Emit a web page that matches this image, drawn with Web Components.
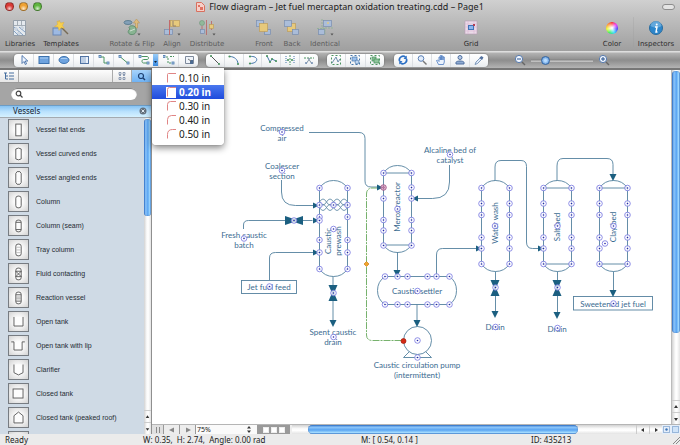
<!DOCTYPE html>
<html lang="en">
<head>
<meta charset="utf-8">
<title>Flow diagram</title>
<style>
html,body{height:100%;margin:0}
body{font:8px/10px "Noto Sans","Open Sans",sans-serif;color:#222;overflow:hidden}
</style>
</head>
<body>
<diagram-app></diagram-app>
<script>
const base = `<style>*{box-sizing:border-box}button{font:inherit;color:inherit;background:none;border:0;padding:0;margin:0;display:flex;align-items:center;justify-content:center}svg{display:block}</style>`;
const define = (name, render, after) => customElements.define(name, class extends HTMLElement {
  constructor() { super(); this.attachShadow({ mode: 'open' }); }
  connectedCallback() { this.shadowRoot.innerHTML = base + render(this); if (after) after(this); }
});
const svg = (w, h, body, extra = '') => `<svg width="${w}" height="${h}" viewBox="0 0 ${w} ${h}" fill="none" aria-hidden="true" ${extra}>${body}</svg>`;

/* Large toolbar icons, 18 x 18 */
const blueBox = (x, y, w, h) => `<rect x="${x}" y="${y}" width="${w}" height="${h}" fill="#a9bfe0" stroke="#7088b0" stroke-width=".7"/>`;
const goldBox = (x, y, w, h) => `<rect x="${x}" y="${y}" width="${w}" height="${h}" fill="#f0cd72" stroke="#c09a4c" stroke-width=".7"/>`;
const more = `<path d="M14.500 14.500h3l-1.500 2z" fill="#444"/>`;
const big = {
  libraries: `<path d="M2.500 1.500h12v15h-12z" fill="#e4e9ee" stroke="#96a0aa"/><path d="M3 6.500h11M6.500 2v4.500M10.500 2v4.500" stroke="#a4adb6"/><path d="M3 8l9 8M8 8l6 5M3 12l4 4" stroke="#86a3c6"/><path d="M4 9h2v2H4zM10 8h2v2h-2zM7 13h2v2H7z" fill="#fff" stroke="#8ba0b8" stroke-width=".5"/>`,
  templates: `<rect x="1" y="9" width="8" height="7" fill="#9db9e2" stroke="#6886b4"/><path d="M8 7l8 8" stroke="#776b55" stroke-width="1.500"/><path d="M7 1l1.600 3 3.400-.7-1.600 3.200 2 2.800-3.400-.5L7 11.500l-1-3.600-3.500-.4L5.500 5.500 5 2l2 1z" fill="#f7cf4d" stroke="#d9a92f" stroke-width=".4"/>`,
  rotate: `<ellipse cx="5" cy="3.500" rx="4" ry="2" fill="#7a9cb8" stroke="#53778d"/><path d="M13.500 0l3 4h-2v5h-2V4h-2z" fill="#e5bd73" stroke="#b98e4c" stroke-width=".6"/><path d="M6 8.500c1-3 7-2 7 1.500 1 4-2 6-5 5.500C5 15 4 12 7 10z" fill="#82b58d" stroke="#568b67"/><path d="M7 12l5-2" stroke="#d6e8d8"/>${more}`,
  align: `${goldBox(7.500, 1.500, 9, 6)}${blueBox(1.500, 10.500, 8, 5)}<path d="M6.500 1v15" stroke="#c45d5d"/><path d="M10 2v5h3" stroke="#8b7860"/>${more}`,
  distribute: `<circle cx="4" cy="4" r="2.500" fill="#8bb895" stroke="#659170" stroke-width=".6"/><path d="M8.500 1v15M4 7v8M13.500 2v9" stroke="#b96868"/>${blueBox(2.500, 10.500, 4, 4)}${goldBox(11.500, 5.500, 4, 4)}${more}`,
  front: `${blueBox(1.500, 1.500, 7, 6)}${blueBox(9.500, 10.500, 6, 5)}${goldBox(4.500, 4.500, 8, 8)}`,
  back: `${goldBox(4.500, 4.500, 8, 8)}${blueBox(1.500, 1.500, 7, 6)}${blueBox(9.500, 10.500, 6, 5)}`,
  identical: `${blueBox(7.500, 1.500, 8, 6)}${blueBox(2.500, 10.500, 6, 5)}<path d="M6 0v9h11M1 9.500h8v7" stroke="#8fb095" stroke-dasharray="2 1"/><circle cx="12" cy="4" r="1" fill="#e9ce7a"/>${more}`,
  grid: `<rect x="3" y="2" width="12" height="13" fill="#eadce8" stroke="#b99cb5" stroke-width=".6"/><path d="M3 5h12M3 8h12M3 12h12M6 2v13M12 2v13" stroke="#dcb6d5" stroke-width=".6"/><rect x="6.500" y="6.500" width="5" height="4" fill="#8db6ef" stroke="#4273b7"/><path d="M11 5h2v2h-2z" fill="#b33f54"/>`,
  inspectors: `<circle cx="9" cy="9" r="6.500" fill="#2d86cb" stroke="#296c9f"/><path d="M3.500 7a5.500 5 0 0 1 11 0c-3 2-7 2-11 0z" fill="#85bfe9" opacity=".6"/><circle cx="9.700" cy="5.500" r="1" fill="#fff"/><path d="M8 8h2l-1 5h1.500" stroke="#fff" stroke-width="1.400"/>`,
};
define('tool-button', el => {
  const icon = el.getAttribute('icon');
  const pic = icon === 'color' ? `<i class="wheel"></i>` : svg(18, 18, big[icon]);
  return `<style>
  :host{display:block;flex:none}
  button{flex-direction:column;width:100%;height:100%;gap:3px;font:7px/9px "DejaVu Sans",sans-serif;white-space:nowrap;color:#2e2e2e}
  :host([dim]) button{color:#5c5c5c}
  .pic{height:18px;display:grid;place-items:center}
  :host([dim]) svg{opacity:.85}
  .wheel{width:12px;height:12px;border-radius:50%;background:radial-gradient(circle,#fff 5%,transparent 65%),conic-gradient(#f33,#e3f,#44f,#3df,#3e6,#ef3,#f93,#f33)}
  </style><button type="button"><span class="pic">${pic}</span><span><slot></slot></span></button>`;
});

/* Small strip icons, 12 x 12 */
const G = '#4b9460', B = '#4677ab';
const sq = (x, y) => `<rect x="${x}" y="${y}" width="2" height="2" fill="#cfe0f5" stroke="${B}" stroke-width=".8"/>`;
const dot = (x, y, c = G) => `<circle cx="${x}" cy="${y}" r="1.100" fill="${c}"/>`;
const small = {
  pointer: `<path d="M4 1.500v8l2-2 1.300 3 1.200-.6-1.200-2.900h2.500z" fill="#eef5ff" stroke="#34619f" stroke-width=".8"/>`,
  rect: `<rect x="1" y="2.500" width="10" height="7" fill="#6ea3df" stroke="#3c72ae"/><path d="M2 4h8" stroke="#a9cdf2"/>`,
  ellipse: `<ellipse cx="6" cy="6" rx="5" ry="3.500" fill="#6ea3df" stroke="#3c72ae"/><path d="M3 4.500h6" stroke="#a9cdf2"/>`,
  text: `<rect x="2.500" y="2.500" width="8" height="7" fill="#eaf1fb" stroke="#5274a4"/><path d="M5 4h3M5 6h3M5 8h3M4 3v6" stroke="#6d90bd" stroke-width=".7"/>`,
  conn1: `${sq(1, 1.500)}${sq(9, 8)}<path d="M3 3h3v6h3" stroke="${G}"/>`,
  conn2: `${sq(1, 1.500)}${sq(9, 8)}<path d="M3 3.500l6 5" stroke="${G}"/>`,
  conn3: `${sq(1, 1.500)}${sq(9, 8)}<path d="M3.500 2.500H9c2 0 2 3 0 3H5.500c-2 0-2 3.500 0 3.500H9" stroke="${G}"/>`,
  conn4: `${sq(0, 1.500)}${sq(9, 8)}<path d="M3 3h2v6h4M7 2.500h4" stroke="${G}" stroke-dasharray="2 1"/>`,
  stamp: `<path d="M2.500 2.500h8v7h-8z" fill="#eff4fa" stroke="#7e8a9c"/><path d="M7 6h3v4H7z" fill="#4d6b91"/><path d="M5 5l3 2" stroke="#777"/>`,
  line: `<path d="M2 2l8 8" stroke="#555"/>${dot(2, 2)}${dot(10, 10)}`,
  arc: `<path d="M1.500 2.500c5 0 8 3 8.500 7" stroke="${B}"/>${dot(1.5, 2.5)}${dot(10, 10)}`,
  arc2: `<path d="M3 2.500c9-1 9 7 0 7" stroke="${B}"/>${dot(3, 2.5)}${dot(3, 9.5)}`,
  spline: `<path d="M2 2l3 6 2-3 4 2" stroke="${B}"/>${dot(2, 2)}${dot(5, 8)}${dot(7, 5)}${dot(11, 7)}`,
  mirror: `<path d="M6 1v10" stroke="#4b9460" stroke-dasharray="2 1"/><path d="M2 2v8M10 2v8" stroke="${B}" stroke-dasharray="1 1"/>${dot(4, 6)}${dot(8, 6)}`,
  cut: `<path d="M1 4h10" stroke="${G}" stroke-dasharray="2 1"/><path d="M3 10l4-6M9 10L5 4" stroke="#8496a8"/>${dot(3, 9, '#7e97b8')}${dot(9, 9, '#7e97b8')}`,
  sel1: `<path d="M1.500 1.500h9v9h-9z" stroke="${G}" stroke-dasharray="2 2"/><path d="M2 9l4-6 2 5 2-3" stroke="#6f8dac"/>`,
  sel2: `<path d="M1.500 1.500h9v9h-9z" stroke="${B}" stroke-dasharray="2 2"/><rect x="3" y="3" width="5" height="4" fill="#9cc0ec" stroke="${B}" stroke-width=".7"/><circle cx="8" cy="8" r="2" fill="#bfd6f2" stroke="${B}" stroke-width=".7"/>`,
  sel3: `<path d="M1.500 1.500h9v9h-9z" stroke="${G}" stroke-dasharray="2 2"/><rect x="3" y="3" width="4" height="4" fill="#8fc59c" stroke="${G}" stroke-width=".8"/><rect x="5" y="5" width="5" height="4" fill="#8fc59c" stroke="${G}" stroke-width=".8"/>`,
  refresh: `<path d="M2.500 7a3.700 3.700 0 0 1 6-3.800M9.500 5a3.700 3.700 0 0 1-6 3.800" stroke="#2b6fc4" stroke-width="1.700"/><path d="M9.800 1.500v3.400H6.500zM2.200 10.500V7.100h3.300z" fill="#2b6fc4"/>`,
  glass: `<circle cx="5" cy="4.500" r="2.800" fill="#e2edfb" stroke="#5a7fb5"/><path d="M7 7l3.500 3.500" stroke="#777" stroke-width="1.400"/>`,
  hand: `<path d="M3.500 10.500L1.500 6.500l1-.5 1.500 1.500V3h1.300v3-4.500h1.400V6 2h1.300v4-3h1.300v5L8.500 10.500z" fill="#eaf2fd" stroke="#4c7bc0" stroke-width=".8"/>`,
  person: `<circle cx="6" cy="3.500" r="2" fill="#b9cbe6" stroke="#4e6f9f"/><path d="M2 8.500c0-2 8-2 8 0v1.500H2z" fill="#8eaad2" stroke="#4e6f9f"/>`,
  dropper: `<path d="M2 10.500l1-2.500 4-4 1.500 1.500-4 4z" fill="#dfe9f6" stroke="#6685ad" stroke-width=".8"/><path d="M6.500 3.500l2-1.500 2 1.500-1.500 2.500z" fill="#54729f"/>`,
};
define('tool-capsule', el => `<style>
  :host{display:flex;flex:none;height:13px;border-radius:4px;background:linear-gradient(#fff,#f7f8f9 50%,#e9ecef);box-shadow:0 0 1px 1px #7777;overflow:hidden}
  button{flex:1;border-left:1px solid #dcdfe3}
  button:first-of-type{border:0}
  button.drop{flex:none;width:5px;height:12px;background:linear-gradient(#9acdf8,#3c8ce2);border:0}
  </style>${el.getAttribute('icons').split(' ').map(n => n === 'drop'
    ? `<button type="button" class="drop" aria-label="Corner radius">${svg(5, 12, '<path d="M1 7h3l-1.500 2z" fill="#123"/>')}</button>`
    : `<button type="button" aria-label="${n}">${svg(12, 12, small[n])}</button>`).join('')}`);

define('zoom-slider', () => `<style>
  :host{display:flex;align-items:center;gap:5px}
  input{appearance:none;width:62px;height:9px;margin:0;background:linear-gradient(#0000 3px,#7c7c7c 3px,#b6b6b6 5px,#c9c9c9 6px,#0000 6px)}
  input::-webkit-slider-thumb{appearance:none;width:9px;height:9px;border-radius:50%;border:1px solid #3565a0;background:radial-gradient(#b9dcff 20%,#3f83d0)}
  </style>
  <button type="button" aria-label="Zoom out">${svg(12, 12, '<circle cx="5" cy="5" r="3.600" fill="#f2f7ff" stroke="#567bb0"/><path d="M3 5h4" stroke="#26538f"/><path d="M8 8l3 3" stroke="#666" stroke-width="1.400"/>')}</button>
  <input type="range" min="0" max="100" value="18" aria-label="Zoom">
  <button type="button" aria-label="Zoom in">${svg(12, 12, '<circle cx="5" cy="5" r="3.600" fill="#f2f7ff" stroke="#567bb0"/><path d="M3 5h4M5 3v4" stroke="#26538f"/><path d="M8 8l3 3" stroke="#666" stroke-width="1.400"/>')}</button>`);

/* Library shapes, 21 x 21 */
const shapes = {
  flat: `<rect x="7.500" y="4.500" width="6" height="13"/>`,
  curved: `<path d="M7.500 5.500q3-2 6 0v11q-3 2-6 0z"/>`,
  angled: `<path d="M7.500 6l1.500-2h3l1.500 2v10l-1.500 2h-3l-1.500-2z"/>`,
  column: `<rect x="7.500" y="4.500" width="6" height="13" rx="2.500"/>`,
  seam: `<rect x="7.500" y="4.500" width="6" height="13" rx="2.500"/><path d="M7.500 7h6M7.500 15h6"/>`,
  tray: `<rect x="7.500" y="4.500" width="6" height="13" rx="2.500"/><path d="M7.500 8h6M7.500 11h6M7.500 14h6" stroke="#bbb"/>`,
  fluid: `<rect x="7.500" y="4.500" width="6" height="13" rx="2.500"/><path d="M7.500 8h6M7.500 14h6M7.500 8l6 6M13.500 8l-6 6"/>`,
  reaction: `<rect x="7.500" y="4.500" width="6" height="13" rx="2.500"/><path d="M7.500 7.500h6M7.500 14.500h6"/><path d="M7.500 10h6M7.500 12h6" stroke="#999"/>`,
  open: `<path d="M5.500 5.500v10h10v-10"/>`,
  lip: `<path d="M2.500 6.500h3v9h9v-9h3"/>`,
  clarifier: `<path d="M5.500 5v9l5 2.500 5-2.500V5"/>`,
  closed: `<rect x="4.500" y="5.500" width="11" height="10"/>`,
  peaked: `<path d="M5.500 16.500V8.500l5-4 5 4v8z"/>`,
  dome: `<path d="M5.500 16.500V8.500q5-6 10 0v8z"/>`,
};
define('library-item', el => `<style>
  :host{display:flex;flex:none}
  button{gap:7px;justify-content:flex-start;font:7px/9px "Liberation Sans",Arial,sans-serif;color:#252b33}
  svg{background:radial-gradient(circle,#fff 25%,#d3d3d3);border:1px solid #777c82;fill:#fdfdfd;stroke:#555;stroke-width:1}
  </style><button type="button"><svg width="21" height="21" viewBox="0 0 21 21" aria-hidden="true">${shapes[el.getAttribute('shape')]}</svg><span><slot></slot></span></button>`);

define('scroll-bar', el => {
  const v = el.hasAttribute('vertical'), dir = v ? '90deg' : '180deg';
  const a = v ? ['M4 2l2 3H2z', 'M4 6l2-3H2z'] : ['M2 4l3-2v4z', 'M6 4L3 2v4z'];
  return `<style>
  :host{display:flex;flex-direction:${v ? 'column' : 'row'};background:linear-gradient(${dir},#d2d2d2,#fafafa 40%,#fff 60%,#e3e3e3)}
  .track{flex:1;min-${v ? 'height' : 'width'}:0;display:flex;flex-direction:inherit}
  .start{flex:var(--before)}.thumb{flex:var(--size);border-radius:5px;background:linear-gradient(${dir},#2f72c9,#8cc5fa 25%,#5aa5f2 55%,#a4dcff 85%,#3e7fce);box-shadow:inset 0 0 1px #174c9b}
  .end{flex:var(--after)}
  button{flex:none;${v ? 'height:12px;width:100%;border-top' : 'width:13px;height:100%;border-left'}:1px solid #ccc}
  </style><div class="track"><span class="start"></span><span class="thumb"></span><span class="end"></span></div>
  ${a.map((d, i) => `<button type="button" aria-label="${i ? 'Forward' : 'Back'}">${svg(8, 8, `<path d="${d}" fill="#333"/>`)}</button>`).join('')}`;
});

define('library-panel', () => {
  const items = [['flat', 'Vessel flat ends'], ['curved', 'Vessel curved ends'], ['angled', 'Vessel angled ends'], ['column', 'Column'], ['seam', 'Column (seam)'], ['tray', 'Tray column'], ['fluid', 'Fluid contacting'], ['reaction', 'Reaction vessel'], ['open', 'Open tank'], ['lip', 'Open tank with lip'], ['clarifier', 'Clarifier'], ['closed', 'Closed tank'], ['peaked', 'Closed tank (peaked roof)'], ['dome', '']];
  return `<style>
  :host{display:flex;flex-direction:column;min-height:0;border-right:1px solid #8f8f8f}
  .tabs{display:flex;height:13px;flex:none;background:linear-gradient(#fdfdfd,#e6e6e6);border-bottom:1px solid #9a9a9a}
  .tabs button{width:19px;border-right:1px solid #aaa}
  .tabs .gap{flex:1;border-right:1px solid #aaa}
  .tabs .on{background:linear-gradient(#a7d3fb,#6fb2f3);border:0}
  .search{flex:none;height:22px;background:#a5a5a5;padding:0 14px 0 11px;display:flex;align-items:center}
  label{flex:1;min-width:0;display:flex;align-items:center;height:12px;padding-left:4px;border-radius:6px;background:#fff;box-shadow:inset 0 1px 1px #777}
  label svg{flex:none}
  input{flex:1;min-width:0;height:10px;border:0;outline:0;background:none;font:inherit;padding:0 4px}
  header{flex:none;height:13px;display:flex;align-items:center;justify-content:space-between;padding:0 4px 2px 13px;border-top:1px solid #6c9cc5;border-bottom:1px solid #a4aab0;background:linear-gradient(#86c3f4,#b9e1fd 50%,#d5f1ff)}
  h2{margin:0;font:8px/8px "Noto Sans",sans-serif;color:#16222e}
  .body{flex:1;min-height:0;display:flex;background:#cfdae5}
  .list{flex:1;min-height:0;overflow:hidden;display:flex;flex-direction:column;gap:3px;padding:1px 0 0 8px}
  scroll-bar{width:7px;flex:none;--before:1;--size:97;--after:195}
  </style>
  <div class="tabs"><button type="button" aria-label="Tree">${svg(12, 10, '<path d="M1 2h3M6 2h5M6 5h5M6 8h5M2.500 2v6H5M2.500 5H5" stroke="#466e9f"/>')}</button><span class="gap"></span><button type="button" aria-label="Grid">${svg(10, 10, '<path d="M2 1.500h2v2H2zM6 1.500h2v2H6zM2 6.500h2v2H2zM6 6.500h2v2H6zM2 4.500h2M6 4.500h2" stroke="#7688a5" stroke-width=".8"/>')}</button><button type="button" class="on" aria-label="Search">${svg(9, 9, '<circle cx="4" cy="4" r="2.500" stroke="#1d3f70" stroke-width="1.200"/><path d="M6 6l2 2" stroke="#1d3f70" stroke-width="1.500"/>')}</button></div>
  <div class="search"><label>${svg(8, 8, '<circle cx="3.500" cy="3.500" r="2.300" stroke="#444" stroke-width="1.200"/><path d="M5 5l2.500 2.500" stroke="#444" stroke-width="1.300"/>')}<input type="text" aria-label="Search libraries"></label></div>
  <header><h2>Vessels</h2><button type="button" aria-label="Close">${svg(8, 8, '<circle cx="4" cy="4" r="3.500" fill="#64707c"/><path d="M2.500 2.500l3 3M5.500 2.500l-3 3" stroke="#dfe9f2"/>')}</button></header>
  <div class="body"><div class="list">${items.map(([s, t]) => `<library-item shape="${s}">${t}</library-item>`).join('')}</div><scroll-bar vertical></scroll-bar></div>`;
});

/* The drawing. Coordinates are those of the page that it lies on. */
const handle = (x, y, c = '') => `<g class="h ${c}"><circle cx="${x}" cy="${y}" r="2.800"/><circle class="dot" cx="${x}" cy="${y}" r=".8"/></g>`;
const handles = (xs, ys) => xs.map(x => ys.map(y => handle(x, y)).join('')).join('');
const vessel = (x, top, bottom, seams) => `<path d="M${x} ${top}v${bottom - top}q5 7.500 14 7.500t14-7.500V${top}q-5-7.500-14-7.500t-14 7.500z"/>${seams ? `<path d="M${x} ${top}h28M${x} ${bottom}h28"/>` : ''}`;
const down = (x, y) => `<path class="f" d="M${x - 3.5} ${y - 7}h7l-3.500 7z"/>`;
const right = (x, y) => `<path class="f" d="M${x - 6} ${y - 3}v6l6-3z"/>`;
const valve = (x, y) => `<path class="f" d="M${x - 4.5} ${y - 8}h9l-3.500 8 3.500 8h-9l3.500-8z"/>`;
const coil = [202, 207.5].map(y => `<path d="M319.500 ${y}q3.500-6 7 0t7 0 7 0 7 0M319.500 ${y}q3.500 6 7 0t7 0 7 0 7 0"/>`).join('');
define('flow-diagram', () => `<style>
  :host{display:block;overflow:hidden;background:#fff}
  svg{width:100%;height:100%}
  .lines{stroke:#54819e;stroke-width:.9}
  .f{fill:#1b5f80;stroke:none}
  text{font:8px Lato,"Open Sans",sans-serif;fill:#3b6c91;stroke:none;text-anchor:middle}
  .h circle{fill:#fff;fill-opacity:.75;stroke:#7474df;stroke-width:.8}
  .h .dot{fill:#2424a8;fill-opacity:1;stroke:none}
  .h.pink circle{fill:#d6a0bc;stroke:#9a4b83}
  </style>
  <svg viewBox="152 70 519 354" preserveAspectRatio="xMinYMin meet" fill="none" role="img" aria-label="Jet fuel mercaptan oxidation treating">
  <g class="lines">
    ${vessel(319.5, 188, 269)}${vessel(383.5, 173, 245, true)}${vessel(481.5, 188, 264)}${vessel(543.5, 188, 264, true)}${vessel(599.5, 188, 264, true)}
    <path d="M385 276.500h64.500q7 5 7 14t-7 14H385q-7.500-5-7.500-14t7.500-14z"/>
    <g stroke-width=".8">${coil}</g>
    <path d="M309 132.500h50q6 0 6 6V181q0 6 6 6h8"/>
    <path d="M281.500 180v12q0 13.500 14 13.500h18"/>
    <path d="M243.500 229v-4q0-4.500 5-4.500h64"/>
    <path d="M269.500 280v-22q0-5.500 6-5.500h38"/>
    <path d="M333 276.500V322M397.500 252v20M417 304.500V322"/>
    <path d="M449.500 165v17q0 16.500-17 16.500H417"/>
    <path d="M436.500 276v-21q0-6.500 6-6.500H476"/>
    <path d="M495 181v-14q0-6.500 6-6.500h20q5.500 0 5.500 6V242q0 6.500 6 6.500h6"/>
    <path d="M557 181v-15q0-7.500 6-7.500h44q6 0 6 6V176"/>
    <path d="M495.500 271.500V314M557.500 271.500V314M613.500 271.500V292"/>
    <path d="M409 352l-5.500 5.500h28L426 352"/><circle cx="417.500" cy="340.500" r="14" fill="#fff"/>
    <rect x="241.500" y="280.500" width="55" height="13"/><rect x="573.500" y="296.500" width="79" height="13.500"/>
  </g>
  <path d="M378 188h-5q-6.500 0-6.500 6V335q0 5.500 6 5.500H403" stroke="#77b26d" stroke-dasharray="7 1 2 1"/>
  ${right(383, 187.5)}${right(319, 205.5)}${right(319, 220.5)}${right(319, 252.5)}${right(482, 248.5)}${right(544, 248.5)}
  <path class="f" d="M412 198.500l6-3v6z"/><path class="f" d="M285 216l9 3 9-3v9l-9-3-9 3z"/>
  ${down(333, 327)}${down(397, 277)}${down(417, 327)}${down(495, 318)}${down(557, 319)}${down(613, 181)}${down(613, 297)}
  ${valve(333, 293)}${valve(495, 288)}${valve(557, 288)}
  <g>
    <text x="282" y="131">Compressed</text><text x="282" y="141">air</text>
    <text x="282" y="169">Coalescer</text><text x="282" y="179">section</text>
    <text x="244" y="238">Fresh caustic</text><text x="244" y="248">batch</text>
    <text x="269" y="290">Jet fuel feed</text>
    <text x="333" y="335">Spent caustic</text><text x="333" y="345">drain</text>
    <text x="450" y="153">Alcaline bed of</text><text x="450" y="163">catalyst</text>
    <text x="417" y="294">Caustic settler</text>
    <text x="417" y="368">Caustic circulation pump</text><text x="417" y="378">(intermittent)</text>
    <text x="495" y="330">Drain</text><text x="557" y="332">Drain</text><text x="613" y="307">Sweetened jet fuel</text>
    <text transform="translate(331 241) rotate(-90)">Caustic</text><text transform="translate(341 241) rotate(-90)">prewash</text>
    <text transform="translate(400 207) rotate(-90)">Merox reactor</text><text transform="translate(498 223) rotate(-90)">Water wash</text>
    <text transform="translate(560 227) rotate(-90)">Salt bed</text><text transform="translate(616 227) rotate(-90)">Clay bed</text>
  </g>
  ${handles([319.5, 347.5], [188, 205, 217, 240, 252.5, 269])}${handle(319.5, 220.5)}
  ${handles([383.5, 411.5], [173, 198.5, 220, 230.5, 245.5])}${handle(383.5, 187.5, 'pink')}${handle(411.5, 187.5)}
  ${handles([481.5, 509.5, 543.5, 571.5, 599.5, 627.5], [188, 203.5, 215, 237.5, 248.5, 264])}
  ${handles([385, 397.5, 407.5, 427.5, 436.5, 449.5], [276.5, 304.5])}
  ${[[282, 132], [282, 170.5], [333.5, 205], [333.5, 229], [294, 220.5], [244, 238.5], [269.5, 286.5], [333.5, 293], [333.5, 337], [397.5, 209], [450, 154.5], [417.5, 291], [417.5, 340.5], [417.5, 357.5], [495, 226], [557.5, 226], [613.5, 226], [605, 243.5], [495.5, 287.5], [557.5, 287.5], [495.5, 327], [557.5, 328], [613.5, 303.5]].map(p => handle(...p)).join('')}
  <path d="M366.500 261.500l2.500 2.500-2.500 2.500-2.500-2.500z" fill="#f2a52c" stroke="#c9811c" stroke-width=".7"/>
  <circle cx="403.500" cy="341" r="2.500" fill="#d42a14" stroke="#a11d0f" stroke-width=".7"/>
  </svg>`);

define('radius-menu', () => `<style>
  :host{display:block;background:#fffffff5;border-radius:0 0 4px 4px;padding:3px 0 4px;box-shadow:0 3px 7px #0007,0 0 1px #0006}
  button{width:100%;height:14px;gap:3px;padding-left:14px;justify-content:flex-start;font:10px/14px "Noto Sans",sans-serif;color:#222}
  .on{background:linear-gradient(#4a78ee,#1f4bdc);color:#fff;font-weight:700}
  </style><div role="menu">${[0.1, 0.2, 0.3, 0.4, 0.5].map((v, i) => `<button type="button" role="menuitem" class="${i === 1 ? 'on' : ''}">${svg(10, 12, `${i === 1 ? '<path d="M0 1h10v11H0z" fill="#fff"/>' : ''}<path d="M1.500 10.500V${2.5 + i}q0-${1 + i} ${1 + i}-${1 + i}H10" stroke="#e08585"/>`)}<span>${v.toFixed(2)} in</span></button>`).join('')}</div>`);

define('page-bar', () => `<style>
  :host{display:flex;height:10px;background:#ededed;border-top:1px solid #b5b5b5}
  .nav{display:flex;flex:none}
  .nav button{width:16px;border-right:1px solid #999}
  .nav button:first-child{width:12px;background:#e0e0e0}
  select{appearance:none;border:0;margin:0;padding:0 0 0 1px;width:50px;height:9px;background:#fafafa;font:7px/9px "Noto Sans",sans-serif;color:#222}
  .zoom{display:flex;align-items:center;width:61px;background:#fafafa}
  .film{flex:none;width:33px;background:#9a9a9a;gap:2px}
  .film i{width:6px;height:6px;background:#fff;border:1px solid #eee}
  scroll-bar{flex:1;--before:16;--size:273;--after:59;margin-left:2px}
  .views{display:flex;flex:none;width:18px;background:#e4eefa}
  .views button{flex:1}
  </style>
  <div class="nav"><button type="button" aria-label="Pause">${svg(8, 8, '<path d="M2.500 1v6M5.500 1v6" stroke="#8a8a8a"/>')}</button><button type="button" aria-label="Previous page">${svg(8, 8, '<path d="M1 4l5-2.500v5z" fill="#888"/>')}</button><button type="button" aria-label="Next page">${svg(8, 8, '<path d="M7 4L2 1.500v5z" fill="#888"/>')}</button></div>
  <div class="zoom"><select aria-label="Page zoom"><option>75%</option></select>${svg(6, 9, '<path d="M3 1l2 2.500H1zM3 8l2-2.500H1z" fill="#333"/>')}</div>
  <button type="button" class="film" aria-label="Pages"><i></i><i></i><i></i></button>
  <scroll-bar></scroll-bar>
  <div class="views"><button type="button" aria-label="Fit page">${svg(9, 9, '<rect x="1.500" y="1.500" width="6" height="6" stroke="#5685bb" stroke-dasharray="1 1"/><circle cx="4.500" cy="4.500" r="1.200" fill="#3d76b8"/>')}</button><button type="button" aria-label="Fit width">${svg(9, 9, '<rect x="1.500" y="1.500" width="6" height="6" fill="#cfe3f8" stroke="#5685bb" stroke-dasharray="1 1"/>')}</button></div>`);

define('diagram-app', () => `<style>
  :host{display:grid;height:100vh;grid-template-rows:13px 38px 19px minmax(0,1fr) 11px;background:#ededed}
  .title{display:flex;align-items:center;padding:0 5px;background:linear-gradient(#d0d0d0,#c3c3c3)}
  .lights{display:flex;gap:5px;width:70px}
  .lights button{width:9px;height:9px;border-radius:50%;border:1px solid #0005;background:radial-gradient(circle at 50% 80%,#fffb,transparent 50%),var(--c)}
  h1{flex:1;margin:0;display:flex;justify-content:center;align-items:center;gap:4px;font:9px/12px "Noto Sans",sans-serif;color:#1c1c1c;white-space:nowrap}
  .end{width:70px;display:flex;justify-content:flex-end}
  .pill{width:13px;height:6px;border:1px solid #8d8d8d;border-radius:3px;background:#e4e4e4}
  .tools{display:flex;background:linear-gradient(#c3c3c3,#9f9f9f);padding:4px 2px 1px 0}
  .flex{flex:1}.g1{flex:0 0 24px}.g2{flex:0 0 22px}.sep{flex:0 0 8px;border-right:1px solid #9994;margin-bottom:3px}
  .strip{display:flex;align-items:center;padding:0 0 0 14px;border-top:1px solid #dedede;border-bottom:2px solid #777;background:linear-gradient(#b8b8b8,#8e8e8e 50%,#949494 60%,#b4b4b4);box-shadow:inset 0 1px #c9c9c9}
  .s1{width:184px}.s2{width:112px;margin-left:8px}.s3{width:57px;margin-left:9px}.s4{width:94px;margin-left:10px}
  zoom-slider{margin-left:26px}
  .work{position:relative;display:grid;grid-template-columns:152px minmax(0,1fr);min-height:0}
  .page{display:grid;grid-template:minmax(0,1fr) 10px / minmax(0,1fr) 9px;min-height:0}
  .page scroll-bar{--before:1;--size:261;--after:67;border-left:1px solid #bbb}
  page-bar{grid-column:1 / 3}
  radius-menu{position:absolute;left:152px;top:-2px;width:72px}
  footer{display:grid;grid-template-columns:138px 218px 170px 1fr auto;align-items:center;padding:0 0 0 5px;background:#ebebeb;font:8px/10px "Noto Sans",sans-serif;color:#222;white-space:pre}
  </style>
  <div class="title"><div class="lights"><button type="button" aria-label="Close" style="--c:#d93a35"></button><button type="button" aria-label="Minimize" style="--c:#efa234"></button><button type="button" aria-label="Zoom" style="--c:#5fb53f"></button></div>
  <h1>${svg(9, 10, '<path d="M.5.5h5l3 3v6h-8z" fill="#f6cfc8" stroke="#d8705f"/><path d="M2 3h2v2H2zM4 5h3v3H4z" fill="#df7161"/>')}<span>Flow diagram – Jet fuel mercaptan oxidation treating.cdd – Page1</span></h1>
  <div class="end"><button type="button" class="pill" aria-label="Toggle toolbar"></button></div></div>
  <div class="tools" role="toolbar">
    <tool-button icon="libraries" style="width:40px">Libraries</tool-button><tool-button icon="templates" style="width:42px">Templates</tool-button><span class="g1"></span>
    <tool-button dim icon="rotate" style="width:52px">Rotate &amp; Flip</tool-button><tool-button dim icon="align" style="width:28px">Align</tool-button><tool-button dim icon="distribute" style="width:42px">Distribute</tool-button><span class="g2"></span>
    <tool-button dim icon="front" style="width:28px">Front</tool-button><tool-button dim icon="back" style="width:28px">Back</tool-button><tool-button dim icon="identical" style="width:38px">Identical</tool-button><span class="flex"></span>
    <tool-button icon="grid" style="width:28px">Grid</tool-button><span class="flex"></span>
    <tool-button icon="color" style="width:28px">Color</tool-button><span class="sep"></span><tool-button icon="inspectors" style="width:44px">Inspectors</tool-button>
  </div>
  <div class="strip"><tool-capsule class="s1" icons="pointer rect ellipse text conn1 conn2 conn3 drop conn4 stamp"></tool-capsule><tool-capsule class="s2" icons="line arc arc2 spline mirror cut"></tool-capsule><tool-capsule class="s3" icons="sel1 sel2 sel3"></tool-capsule><tool-capsule class="s4" icons="refresh glass hand person dropper"></tool-capsule><zoom-slider></zoom-slider></div>
  <div class="work"><library-panel></library-panel>
    <div class="page"><flow-diagram></flow-diagram><scroll-bar vertical></scroll-bar><page-bar></page-bar></div>
    <radius-menu></radius-menu></div>
  <footer><span>Ready</span><span>W: 0.35,  H: 2.74,  Angle: 0.00 rad</span><span>M: [ 0.54, 0.14 ]</span><span>ID: 435213</span>${svg(8, 8, '<path d="M1 8l7-7M4 8l4-4" stroke="#888"/>')}</footer>`);
</script>
</body>
</html>
